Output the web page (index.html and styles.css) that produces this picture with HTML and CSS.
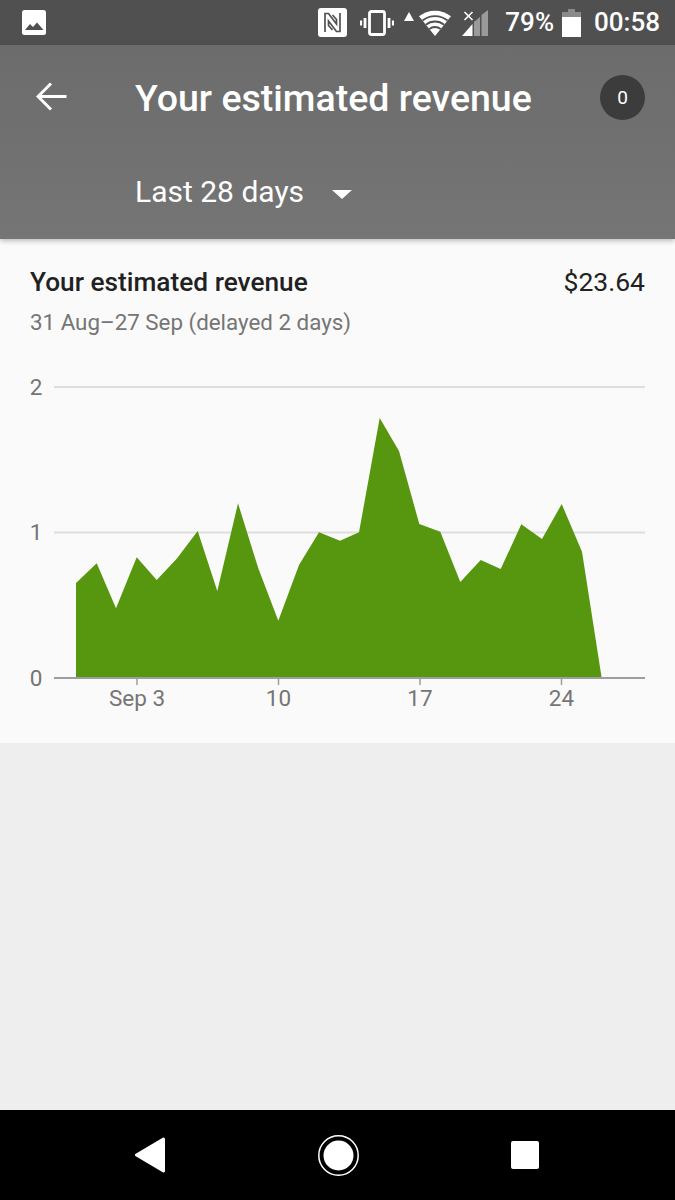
FILE: index.html
```html
<!DOCTYPE html>
<html lang="en">
    <head>
        <meta charset="UTF-8" />
        <meta name="viewport" content="width=device-width, initial-scale=1.0" />
        <title>Your estimated revenue</title>
        <link rel="stylesheet" href="styles.css">
    </head>
    <body>
        <div class="phone">
            <!-- Status bar -->
            <div class="status-bar">
                <svg class="icon-picture" width="24" height="25" viewBox="0 0 24 25">
                    <rect width="24" height="25" rx="2.5" fill="#fff" />
                    <path d="M3 20 L8 14 L11 17 L15 12.5 L21.5 20 Z" fill="#505050" />
                </svg>
                <div class="status-right">
                    <svg class="icon-nfc" width="29" height="29" viewBox="0 0 29 29">
                        <rect width="29" height="29" rx="3" fill="#fff" />
                        <path d="M7 24 V5.500 H10.500 L18.500 16 V11.500 L14.500 7" fill="none" stroke="#505050" stroke-width="1.700" />
                        <path d="M22 5 V23.500 H18.500 L10.500 13 V17.500 L14.500 22" fill="none" stroke="#505050" stroke-width="1.700" />
                    </svg>
                    <svg class="icon-vibrate" width="34" height="26" viewBox="0 0 34 26">
                        <rect x="9.500" y="1.500" width="15" height="23" rx="2" fill="none" stroke="#fff" stroke-width="2.800" />
                        <path d="M5 8 V18 M29 8 V18" stroke="#fff" stroke-width="2.800" />
                        <path d="M1 10.500 V15.500 M33 10.500 V15.500" stroke="#fff" stroke-width="2.200" />
                    </svg>
                    <svg class="icon-up" width="10" height="9" viewBox="0 0 10 9">
                        <path d="M5 0 L10 9 H0 Z" fill="#fff" />
                    </svg>
                    <svg class="icon-wifi" width="32" height="26" viewBox="0 0 32 26">
                        <path d="M16 26 L0 6.300 A25.400 25.400 0 0 1 32 6.300 Z" fill="#fff" />
                        <path d="M10.330 19.020 A9 9 0 0 1 21.670 19.020 M6.860 14.750 A14.500 14.500 0 0 1 25.140 14.750 M3.400 10.500 A20 20 0 0 1 28.600 10.500" fill="none" stroke="#505050" stroke-width="1.800" />
                    </svg>
                    <svg class="icon-signal" width="26" height="26" viewBox="0 0 26 26">
                        <path d="M26 0 V26 H19.500 V5 Z" fill="#9a9a9a" />
                        <path d="M18 7 V26 H12 V12 Z" fill="#9a9a9a" />
                        <path d="M10.500 14 V26 H0 Z" fill="#fff" />
                        <path d="M2.500 2 L10.500 10 M10.500 2 L2.500 10" stroke="#fff" stroke-width="1.600" />
                    </svg>
                    <span class="status-text battery-text">79%</span>
                    <svg class="icon-battery" width="19" height="28" viewBox="0 0 19 28">
                        <path d="M6 0 H13 V3 H19 V8 H0 V3 H6 Z" fill="#8a8a8a" />
                        <rect y="8" width="19" height="20" fill="#fff" />
                    </svg>
                    <span class="status-text clock">00:58</span>
                </div>
            </div>

            <!-- App bar -->
            <div class="app-bar">
                <div class="app-bar-top">
                    <svg class="back-arrow" width="31" height="29" viewBox="0 0 31 29">
                        <path d="M30.500 14.500 H3 M15 1.500 L2 14.500 L15 27.500" fill="none" stroke="#fff" stroke-width="3" />
                    </svg>
                    <div class="app-title">Your estimated revenue</div>
                    <div class="badge">0</div>
                </div>
                <div class="range-select">
                    <span>Last 28 days</span>
                    <i class="caret"></i>
                </div>
            </div>

            <!-- Revenue card -->
            <div class="card">
                <div class="card-head">
                    <div class="card-title">Your estimated revenue</div>
                    <div class="card-amount">$23.64</div>
                </div>
                <div class="card-sub">31 Aug–27 Sep (delayed 2 days)</div>
                <svg class="chart" width="675" height="368" viewBox="0 355 675 368">
                    <line class="grid" x1="54" y1="387" x2="645" y2="387" />
                    <line class="grid" x1="54" y1="532.500" x2="645" y2="532.500" />
                    <polygon class="area" points="76,678 76,583 96.700,563.300 116,608.300 136.700,557.300 156.700,580 176.700,558.700 197.700,531 217.300,591 238,503.300 258.300,568.300 278.300,620.700 299,565 319,532.300 340,540.700 359,532.300 379.700,418 399,451 419.300,524 440.300,531.700 460.300,582 480.700,560 500.700,569 521.300,524.300 542,539 561.700,504 582,551.700 601.700,678" />
                    <line class="axis" x1="54" y1="678" x2="645" y2="678" />
                    <line class="tick" x1="137" y1="679" x2="137" y2="685" />
                    <line class="tick" x1="278.500" y1="679" x2="278.500" y2="685" />
                    <line class="tick" x1="420" y1="679" x2="420" y2="685" />
                    <line class="tick" x1="561.500" y1="679" x2="561.500" y2="685" />
                    <text class="label" x="36" y="395" text-anchor="middle">2</text>
                    <text class="label" x="36" y="540" text-anchor="middle">1</text>
                    <text class="label" x="36" y="686" text-anchor="middle">0</text>
                    <text class="label" x="137" y="706" text-anchor="middle">Sep 3</text>
                    <text class="label" x="278.500" y="706" text-anchor="middle">10</text>
                    <text class="label" x="420" y="706" text-anchor="middle">17</text>
                    <text class="label" x="561.500" y="706" text-anchor="middle">24</text>
                </svg>
            </div>

            <div class="page-fill"></div>

            <!-- Nav bar -->
            <div class="nav-bar">
                <svg width="30" height="36" viewBox="0 0 30 36">
                    <path d="M28.500 2 L1.500 18 L28.500 34 Z" fill="#fff" stroke="#fff" stroke-width="3" stroke-linejoin="round" />
                </svg>
                <svg width="41" height="41" viewBox="0 0 41 41">
                    <circle cx="20.500" cy="20.500" r="19.700" fill="none" stroke="#fff" stroke-width="1.500" />
                    <circle cx="20.500" cy="20.500" r="15" fill="#fff" />
                </svg>
                <svg width="28" height="28" viewBox="0 0 28 28">
                    <rect width="28" height="28" rx="2" fill="#fff" />
                </svg>
            </div>
        </div>
    </body>
</html>
```

FILE: styles.css
```css
html,
body {
    margin: 0;
    height: 100%;
}

body {
    font-family: Roboto, "Liberation Sans", sans-serif;
    background-color: #eeeeee;
}

.phone {
    width: 675px;
    height: 1200px;
    display: flex;
    flex-direction: column;
    overflow: hidden;
}

/* Status bar */
.status-bar {
    height: 45px;
    flex: none;
    box-sizing: border-box;
    padding: 0 15px 0 22px;
    display: flex;
    justify-content: space-between;
    align-items: center;
    background-color: #505050;
}

.status-right {
    display: flex;
    align-items: center;
}

.status-right svg {
    display: block;
}

.status-text {
    color: #fff;
    font-size: 26px;
    font-weight: 500;
    line-height: 45px;
}

.icon-vibrate {
    margin-left: 13px;
}

.icon-up {
    margin: 0 5px 12px 10px;
}

.icon-wifi {
    margin-right: 11px;
}

.battery-text {
    margin-left: 17px;
}

.icon-battery {
    margin-left: 8px;
}

.clock {
    margin-left: 13px;
}

/* App bar */
.app-bar {
    height: 194px;
    flex: none;
    box-sizing: border-box;
    padding: 30px 30px 0 36px;
    background: linear-gradient(#6c6c6c, #757575);
    box-shadow: 0 2px 5px rgba(0, 0, 0, 0.25);
    color: #fff;
    position: relative;
}

.app-bar-top {
    display: flex;
    align-items: center;
    height: 45px;
}

.back-arrow {
    flex: none;
    margin-bottom: 3px;
}

.app-title {
    flex: 1;
    margin-left: 68px;
    font-size: 37.500px;
    font-weight: 500;
    white-space: nowrap;
}

.badge {
    width: 45px;
    height: 45px;
    flex: none;
    border-radius: 50%;
    background-color: #3c3c3c;
    font-size: 19px;
    line-height: 45px;
    text-align: center;
}

.range-select {
    display: flex;
    align-items: center;
    margin: 50px 0 0 99px;
    height: 42px;
    font-size: 30px;
}

.caret {
    margin: 6px 0 0 28px;
    width: 0;
    height: 0;
    border-left: 10px solid transparent;
    border-right: 10px solid transparent;
    border-top: 9px solid #fff;
}

/* Card */
.card {
    height: 504px;
    flex: none;
    box-sizing: border-box;
    padding-top: 27px;
    background-color: #fafafa;
}

.card-head {
    display: flex;
    justify-content: space-between;
    padding: 0 30px;
    height: 32px;
    line-height: 32px;
    color: #212121;
}

.card-title {
    font-size: 26.250px;
    font-weight: 500;
}

.card-amount {
    font-size: 26.500px;
}

.card-sub {
    padding: 0 30px;
    margin-top: 8px;
    height: 32px;
    line-height: 32px;
    font-size: 22.350px;
    color: #757575;
}

.chart {
    display: block;
    margin-top: 17px;
}

.grid {
    stroke: #dedede;
    stroke-width: 2;
}

.axis {
    stroke: #9e9e9e;
    stroke-width: 2;
}

.tick {
    stroke: #9e9e9e;
    stroke-width: 1.500;
}

.area {
    fill: #57970f;
}

.label {
    fill: #757575;
    font-size: 22.500px;
}

.page-fill {
    flex: 1;
}

/* Nav bar */
.nav-bar {
    height: 90px;
    flex: none;
    box-sizing: border-box;
    padding: 0 136px 0 135px;
    display: flex;
    justify-content: space-between;
    align-items: center;
    background-color: #000;
}
```
